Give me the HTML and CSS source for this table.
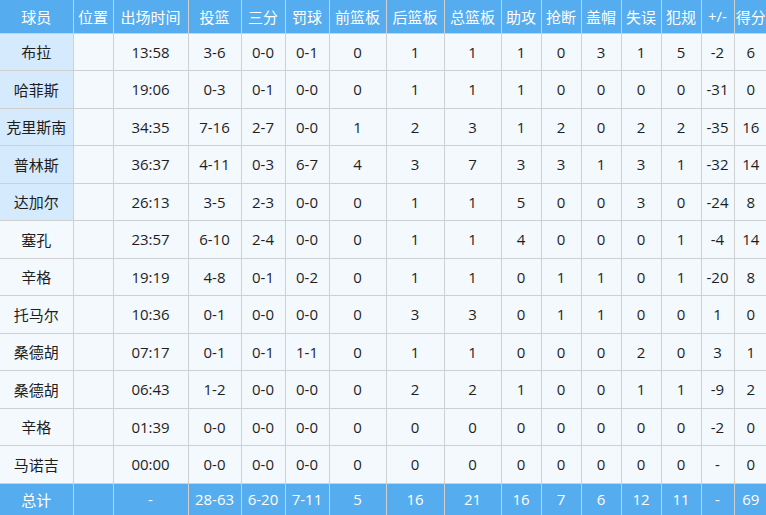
FILE: index.html
```html
<!DOCTYPE html>
<html lang="zh">
<head>
<meta charset="utf-8">
<title>球员数据</title>
<link rel="stylesheet" href="styles.css">
</head>
<body>
<table class="stats">
  <colgroup>
    <col class="c-name"><col class="c-pos"><col class="c-time"><col class="c-fg"><col class="c-3p"><col class="c-ft"><col class="c-or"><col class="c-dr"><col class="c-tr"><col class="c-s"><col class="c-s"><col class="c-s"><col class="c-s"><col class="c-s"><col class="c-pm"><col class="c-pts">
  </colgroup>
  <thead>
    <tr><th>球员</th><th>位置</th><th>出场时间</th><th>投篮</th><th>三分</th><th>罚球</th><th>前篮板</th><th>后篮板</th><th>总篮板</th><th>助攻</th><th>抢断</th><th>盖帽</th><th>失误</th><th>犯规</th><th>+/-</th><th>得分</th></tr>
  </thead>
  <tbody>
    <tr><td class="name starter">布拉</td><td></td><td>13:58</td><td>3-6</td><td>0-0</td><td>0-1</td><td>0</td><td>1</td><td>1</td><td>1</td><td>0</td><td>3</td><td>1</td><td>5</td><td>-2</td><td>6</td></tr>
    <tr><td class="name starter">哈菲斯</td><td></td><td>19:06</td><td>0-3</td><td>0-1</td><td>0-0</td><td>0</td><td>1</td><td>1</td><td>1</td><td>0</td><td>0</td><td>0</td><td>0</td><td>-31</td><td>0</td></tr>
    <tr><td class="name starter">克里斯南</td><td></td><td>34:35</td><td>7-16</td><td>2-7</td><td>0-0</td><td>1</td><td>2</td><td>3</td><td>1</td><td>2</td><td>0</td><td>2</td><td>2</td><td>-35</td><td>16</td></tr>
    <tr><td class="name starter">普林斯</td><td></td><td>36:37</td><td>4-11</td><td>0-3</td><td>6-7</td><td>4</td><td>3</td><td>7</td><td>3</td><td>3</td><td>1</td><td>3</td><td>1</td><td>-32</td><td>14</td></tr>
    <tr><td class="name starter">达加尔</td><td></td><td>26:13</td><td>3-5</td><td>2-3</td><td>0-0</td><td>0</td><td>1</td><td>1</td><td>5</td><td>0</td><td>0</td><td>3</td><td>0</td><td>-24</td><td>8</td></tr>
    <tr><td class="name">塞孔</td><td></td><td>23:57</td><td>6-10</td><td>2-4</td><td>0-0</td><td>0</td><td>1</td><td>1</td><td>4</td><td>0</td><td>0</td><td>0</td><td>1</td><td>-4</td><td>14</td></tr>
    <tr><td class="name">辛格</td><td></td><td>19:19</td><td>4-8</td><td>0-1</td><td>0-2</td><td>0</td><td>1</td><td>1</td><td>0</td><td>1</td><td>1</td><td>0</td><td>1</td><td>-20</td><td>8</td></tr>
    <tr><td class="name">托马尔</td><td></td><td>10:36</td><td>0-1</td><td>0-0</td><td>0-0</td><td>0</td><td>3</td><td>3</td><td>0</td><td>1</td><td>1</td><td>0</td><td>0</td><td>1</td><td>0</td></tr>
    <tr><td class="name">桑德胡</td><td></td><td>07:17</td><td>0-1</td><td>0-1</td><td>1-1</td><td>0</td><td>1</td><td>1</td><td>0</td><td>0</td><td>0</td><td>2</td><td>0</td><td>3</td><td>1</td></tr>
    <tr><td class="name">桑德胡</td><td></td><td>06:43</td><td>1-2</td><td>0-0</td><td>0-0</td><td>0</td><td>2</td><td>2</td><td>1</td><td>0</td><td>0</td><td>1</td><td>1</td><td>-9</td><td>2</td></tr>
    <tr><td class="name">辛格</td><td></td><td>01:39</td><td>0-0</td><td>0-0</td><td>0-0</td><td>0</td><td>0</td><td>0</td><td>0</td><td>0</td><td>0</td><td>0</td><td>0</td><td>-2</td><td>0</td></tr>
    <tr><td class="name">马诺吉</td><td></td><td>00:00</td><td>0-0</td><td>0-0</td><td>0-0</td><td>0</td><td>0</td><td>0</td><td>0</td><td>0</td><td>0</td><td>0</td><td>0</td><td>-</td><td>0</td></tr>
  </tbody>
  <tfoot>
    <tr><td>总计</td><td></td><td>-</td><td>28-63</td><td>6-20</td><td>7-11</td><td>5</td><td>16</td><td>21</td><td>16</td><td>7</td><td>6</td><td>12</td><td>11</td><td>-</td><td>69</td></tr>
  </tfoot>
</table>
</body>
</html>
```

FILE: styles.css
```css
html, body {
  margin: 0;
  padding: 0;
  background: #f4f9fe;
}

.stats {
  width: 766px;
  border-collapse: collapse;
  table-layout: fixed;
  font-family: "Open Sans", "Noto Sans CJK SC", sans-serif;
  font-size: 15px;
  color: #1e1e1e;
}

.c-name { width: 73px; }
.c-pos { width: 40px; }
.c-time { width: 75px; }
.c-fg { width: 53px; }
.c-3p { width: 44px; }
.c-ft { width: 44px; }
.c-or { width: 57px; }
.c-dr { width: 58px; }
.c-tr { width: 57px; }
.c-s { width: 40px; }
.c-pm { width: 33px; }
.c-pts { width: 33px; }

.stats th,
.stats td {
  border: 1px solid #d0d0d0;
  padding: 0;
  text-align: center;
  vertical-align: middle;
  white-space: nowrap;
  font-weight: normal;
}

.stats tr > :first-child { border-left: none; }
.stats tr > :last-child { border-right: none; }
.stats thead th { border-top: none; }
.stats tfoot td { border-bottom: none; }

.stats thead tr { height: 33px; }
.stats thead th {
  background: #55acee;
  color: #fff;
}

.stats tbody tr { height: 37.5px; }
.stats tbody td { background: #f4f9fe; }
.stats tbody td.starter { background: #d6eafd; }

.stats tfoot tr { height: 32px; }
.stats tfoot td {
  background: #55acee;
  color: #fff;
}
```
